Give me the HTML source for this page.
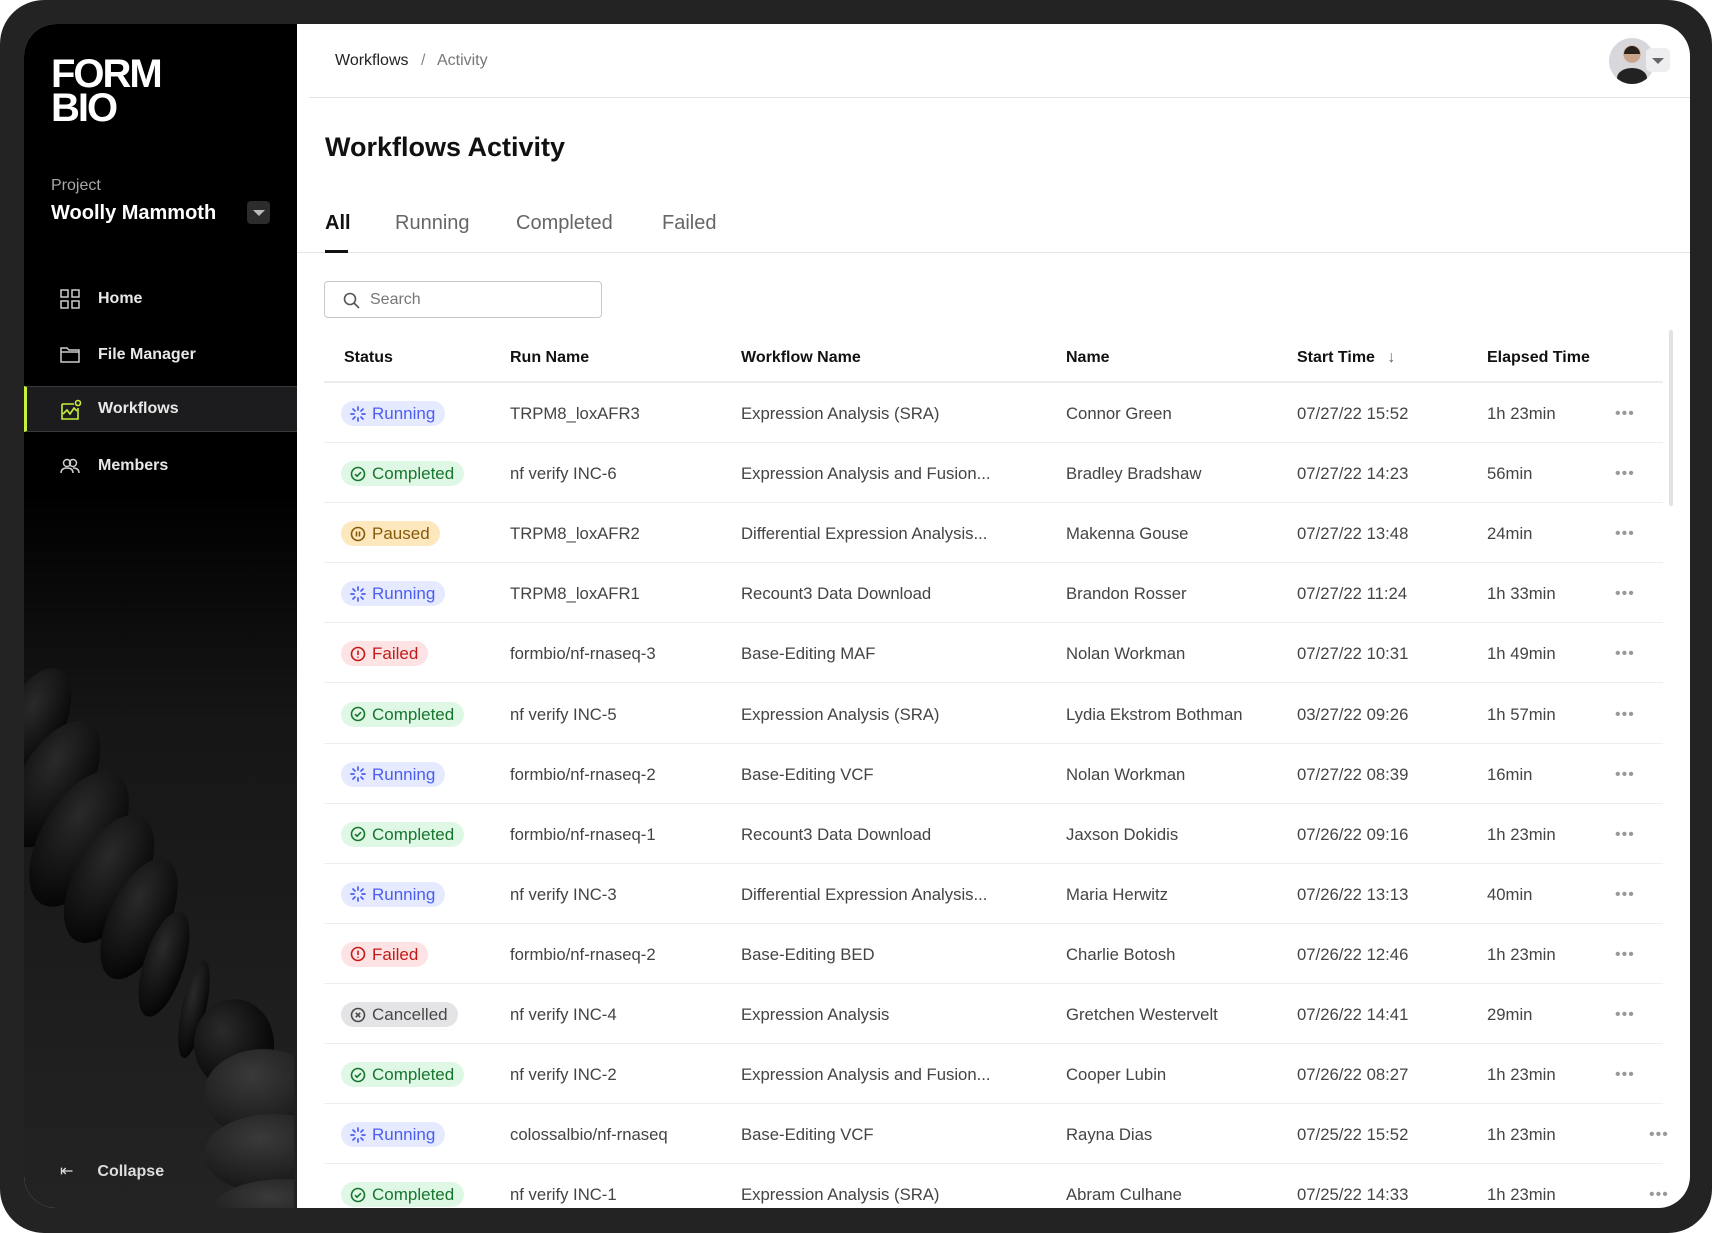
<!DOCTYPE html>
<html><head><meta charset="utf-8"><style>
*{box-sizing:border-box;margin:0;padding:0}
body{width:1712px;height:1233px;background:#fff;font-family:"Liberation Sans",sans-serif;overflow:hidden;position:relative}
.frame{position:absolute;left:0;top:0;width:1712px;height:1233px;background:#232323;border-radius:44px}
.panel{position:absolute;left:24px;top:24px;width:1666px;height:1184px;background:#fff;border-radius:32px;overflow:hidden}
.side{position:absolute;left:0;top:0;width:273px;height:1184px;background:linear-gradient(#000 0,#000 470px,#161616 700px,#232323 1184px);overflow:hidden}
.abs{position:absolute;white-space:nowrap}
.nav{position:absolute;left:0;width:273px;height:44px;color:#e8e8e8;font-size:16px;font-weight:bold}
.nav span{position:absolute;left:74px;top:13px}
.nav svg{position:absolute;left:36px;top:12px}
.main{position:absolute;left:249px;top:0;right:0;bottom:0}
.th{position:absolute;top:325px;font-size:16px;font-weight:bold;color:#111}
.row{position:absolute;left:51px;width:1339px;height:60px;border-bottom:1px solid #eeeeee;font-size:16.7px;color:#444}
.row .c{position:absolute;top:21px;white-space:nowrap}
.b{position:absolute;left:17px;top:18px;height:25px;border-radius:13px;padding:0 10px 0 9px;font-size:17px;line-height:25px;display:flex;align-items:center;gap:6px}
.b svg{flex:none}
.run{background:#e6eaff;color:#4b5ef0}
.com{background:#dff7e5;color:#17762f}
.pau{background:#fde7bd;color:#85590a}
.fai{background:#fde3e3;color:#c21a1a}
.can{background:#e4e4e6;color:#484848}
.dots{position:absolute;top:22px;font-size:16px;color:#999;letter-spacing:1px}
</style></head><body>
<div class="frame"></div>
<div class="panel">
 <div class="side">
  <svg class="abs" style="left:-30px;top:640px" width="300" height="560" viewBox="0 0 300 560">
   <defs><radialGradient id="g" cx="35%" cy="35%" r="70%"><stop offset="0" stop-color="#2a2a2a"/><stop offset="1" stop-color="#050505"/></radialGradient>
   <radialGradient id="g2" cx="40%" cy="30%" r="70%"><stop offset="0" stop-color="#3a3a3a"/><stop offset="1" stop-color="#151515"/></radialGradient></defs>
   <ellipse cx="40" cy="60" rx="30" ry="60" fill="url(#g)" transform="rotate(25 40 60)"/>
   <ellipse cx="60" cy="120" rx="35" ry="70" fill="url(#g)" transform="rotate(30 60 120)"/>
   <ellipse cx="85" cy="175" rx="38" ry="75" fill="url(#g)" transform="rotate(30 85 175)"/>
   <ellipse cx="115" cy="215" rx="35" ry="70" fill="url(#g)" transform="rotate(28 115 215)"/>
   <ellipse cx="145" cy="255" rx="30" ry="65" fill="url(#g)" transform="rotate(25 145 255)"/>
   <ellipse cx="170" cy="300" rx="20" ry="55" fill="url(#g)" transform="rotate(18 170 300)"/>
   <ellipse cx="200" cy="345" rx="12" ry="50" fill="url(#g)" transform="rotate(12 200 345)"/>
   <ellipse cx="240" cy="380" rx="40" ry="45" fill="url(#g)"/>
   <ellipse cx="270" cy="430" rx="60" ry="45" fill="url(#g2)"/>
   <ellipse cx="280" cy="490" rx="70" ry="40" fill="url(#g2)"/>
   <ellipse cx="290" cy="545" rx="70" ry="30" fill="url(#g2)"/>
  </svg>
  <div class="abs" style="left:27px;top:33px;color:#fff;font-weight:bold;font-size:40px;line-height:34px;letter-spacing:-2px">FORM<br>BIO</div>
  <div class="abs" style="left:27px;top:153px;color:#a8a8a8;font-size:16px">Project</div>
  <div class="abs" style="left:27px;top:178px;color:#fff;font-size:20px;font-weight:bold">Woolly Mammoth</div>
  <div class="abs" style="left:223px;top:177px;width:23px;height:23px;background:#2c2c2c;border-radius:4px"><div style="position:absolute;left:6px;top:9px;border-left:6px solid transparent;border-right:6px solid transparent;border-top:6px solid #bbb"></div></div>
  <div class="nav" style="top:253px"><svg width="20" height="20" fill="none" stroke="#ccc" stroke-width="1.5"><rect x="1" y="1" width="7" height="7"/><rect x="12" y="1" width="7" height="7"/><rect x="1" y="12" width="7" height="7"/><rect x="12" y="12" width="7" height="7"/></svg><span>Home</span></div>
  <div class="nav" style="top:309px"><svg width="20" height="20" fill="none" stroke="#ccc" stroke-width="1.5"><path d="M1 3h6l2 2h10v12H1z M1 7h18"/></svg><span>File Manager</span></div>
  <div class="nav" style="top:362px;height:46px;background:#1c1c1e;border-top:1px solid #3a3a3a;border-bottom:1px solid #3a3a3a;border-left:3px solid #c6f03c"><svg width="22" height="22" fill="none" stroke="#c6f03c" stroke-width="1.6" style="left:33px"><path d="M2 5h12M2 5v15h16V9"/><path d="M3 15l4-4 3 4 4-6 3 3"/><circle cx="18" cy="4" r="2.5"/></svg><span style="left:71px">Workflows</span></div>
  <div class="nav" style="top:420px"><svg width="20" height="20" fill="none" stroke="#ccc" stroke-width="1.5"><circle cx="7" cy="7" r="3.5"/><circle cx="13" cy="7" r="3.5"/><path d="M1 17c0-4 3-5 6-5s6 1 6 5M13 12c3 0 6 1 6 5"/></svg><span>Members</span></div>
  <div class="abs" style="left:36px;top:1137px;color:#ddd;font-size:16px;font-weight:bold"><span style="font-weight:normal;margin-right:24px">⇤</span>Collapse</div>
 </div>
 <div class="main">
  <div class="abs" style="left:62px;top:28px;font-size:16px;color:#222">Workflows <span style="color:#888;margin:0 8px">/</span> <span style="color:#777">Activity</span></div>
  <div class="abs" style="left:36px;right:0;top:73px;height:1px;background:#e4e4e4"></div>
  <div class="abs" style="left:1336px;top:14px;width:46px;height:46px;border-radius:50%;background:radial-gradient(circle at 50% 35%,#c9a48a 0,#c9a48a 22%,#d8d8dc 24%);overflow:hidden"><div style="position:absolute;left:8px;top:30px;width:30px;height:20px;border-radius:50% 50% 0 0;background:#222"></div><div style="position:absolute;left:15px;top:8px;width:16px;height:8px;border-radius:8px 8px 0 0;background:#2a211c"></div></div>
  <div class="abs" style="left:1373px;top:24px;width:24px;height:24px;background:#eeeef0;border-radius:5px"><div style="position:absolute;left:6px;top:10px;border-left:6px solid transparent;border-right:6px solid transparent;border-top:6px solid #666"></div></div>
  <div class="abs" style="left:52px;top:108px;font-size:27px;font-weight:bold;color:#111">Workflows Activity</div>
  <div class="abs" style="left:52px;top:188px;font-size:20px;font-weight:bold;color:#111">All</div>
  <div class="abs" style="left:122px;top:188px;font-size:20px;color:#666">Running</div>
  <div class="abs" style="left:243px;top:188px;font-size:20px;color:#666">Completed</div>
  <div class="abs" style="left:389px;top:188px;font-size:20px;color:#666">Failed</div>
  <div class="abs" style="left:24px;right:0;top:228px;height:1px;background:#e4e4e4"></div>
  <div class="abs" style="left:52px;top:226px;width:23px;height:3px;background:#111"></div>
  <div class="abs" style="left:51px;top:257px;width:278px;height:37px;border:1px solid #c8c8c8;border-radius:4px"><svg style="position:absolute;left:18px;top:10px" width="17" height="17" fill="none" stroke="#555" stroke-width="1.6"><circle cx="7" cy="7" r="5.5"/><path d="M11 11l5 5"/></svg><span style="position:absolute;left:45px;top:9px;font-size:16px;color:#777">Search</span></div>
  <div class="th" style="left:71px">Status</div>
  <div class="th" style="left:237px">Run Name</div>
  <div class="th" style="left:468px">Workflow Name</div>
  <div class="th" style="left:793px">Name</div>
  <div class="th" style="left:1024px">Start Time <span style="font-weight:normal;color:#666;margin-left:8px">↓</span></div>
  <div class="th" style="left:1214px">Elapsed Time</div>
  <div class="abs" style="left:51px;width:1339px;top:357px;height:2px;background:#ececec"></div>
  <div class="abs" style="left:1396px;top:306px;width:4px;height:176px;background:#e2e2e4;border-radius:2px"></div>
  <div id="rows"></div>
 </div>
</div>
<script>
var I={
run:'<svg width="16" height="16" stroke="currentColor" stroke-width="1.7" stroke-linecap="round"><path d="M8 1v3M8 12v3M1 8h3M12 8h3M3 3l2 2M11 11l2 2M3 13l2-2M11 5l2-2"/></svg>',
com:'<svg width="16" height="16" fill="none" stroke="currentColor" stroke-width="1.6"><circle cx="8" cy="8" r="6.5"/><path d="M5 8.2l2 2 4-4"/></svg>',
pau:'<svg width="16" height="16" fill="none" stroke="currentColor" stroke-width="1.6"><circle cx="8" cy="8" r="6.5"/><path d="M6.5 5.5v5M9.5 5.5v5"/></svg>',
fai:'<svg width="16" height="16" fill="none" stroke="currentColor" stroke-width="1.6"><circle cx="8" cy="8" r="6.5"/><path d="M8 4.5v4.5M8 10.8v1"/></svg>',
can:'<svg width="16" height="16" fill="none" stroke="currentColor" stroke-width="1.6"><circle cx="8" cy="8" r="6.5"/><path d="M5.8 5.8l4.4 4.4M10.2 5.8l-4.4 4.4"/></svg>'};
var L={run:'Running',com:'Completed',pau:'Paused',fai:'Failed',can:'Cancelled'};
var D=[
['run','TRPM8_loxAFR3','Expression Analysis (SRA)','Connor Green','07/27/22 15:52','1h 23min'],
['com','nf verify INC-6','Expression Analysis and Fusion...','Bradley Bradshaw','07/27/22 14:23','56min'],
['pau','TRPM8_loxAFR2','Differential Expression Analysis...','Makenna Gouse','07/27/22 13:48','24min'],
['run','TRPM8_loxAFR1','Recount3 Data Download','Brandon Rosser','07/27/22 11:24','1h 33min'],
['fai','formbio/nf-rnaseq-3','Base-Editing MAF','Nolan Workman','07/27/22 10:31','1h 49min'],
['com','nf verify INC-5','Expression Analysis (SRA)','Lydia Ekstrom Bothman','03/27/22 09:26','1h 57min'],
['run','formbio/nf-rnaseq-2','Base-Editing VCF','Nolan Workman','07/27/22 08:39','16min'],
['com','formbio/nf-rnaseq-1','Recount3 Data Download','Jaxson Dokidis','07/26/22 09:16','1h 23min'],
['run','nf verify INC-3','Differential Expression Analysis...','Maria Herwitz','07/26/22 13:13','40min'],
['fai','formbio/nf-rnaseq-2','Base-Editing BED','Charlie Botosh','07/26/22 12:46','1h 23min'],
['can','nf verify INC-4','Expression Analysis','Gretchen Westervelt','07/26/22 14:41','29min'],
['com','nf verify INC-2','Expression Analysis and Fusion...','Cooper Lubin','07/26/22 08:27','1h 23min'],
['run','colossalbio/nf-rnaseq','Base-Editing VCF','Rayna Dias','07/25/22 15:52','1h 23min'],
['com','nf verify INC-1','Expression Analysis (SRA)','Abram Culhane','07/25/22 14:33','1h 23min']];
var h='';
D.forEach(function(r,i){
 var dx=i>=12?1376:1342;
 h+='<div class="row" style="top:'+(359+i*60.1)+'px"><div class="b '+r[0]+'">'+I[r[0]]+L[r[0]]+'</div>'+
 '<div class="c" style="left:186px">'+r[1]+'</div><div class="c" style="left:417px">'+r[2]+'</div><div class="c" style="left:742px">'+r[3]+'</div><div class="c" style="left:973px">'+r[4]+'</div><div class="c" style="left:1163px">'+r[5]+'</div><div class="dots" style="left:'+(dx-51)+'px">•••</div></div>';
});
document.getElementById('rows').innerHTML=h;
</script>
</body></html>
